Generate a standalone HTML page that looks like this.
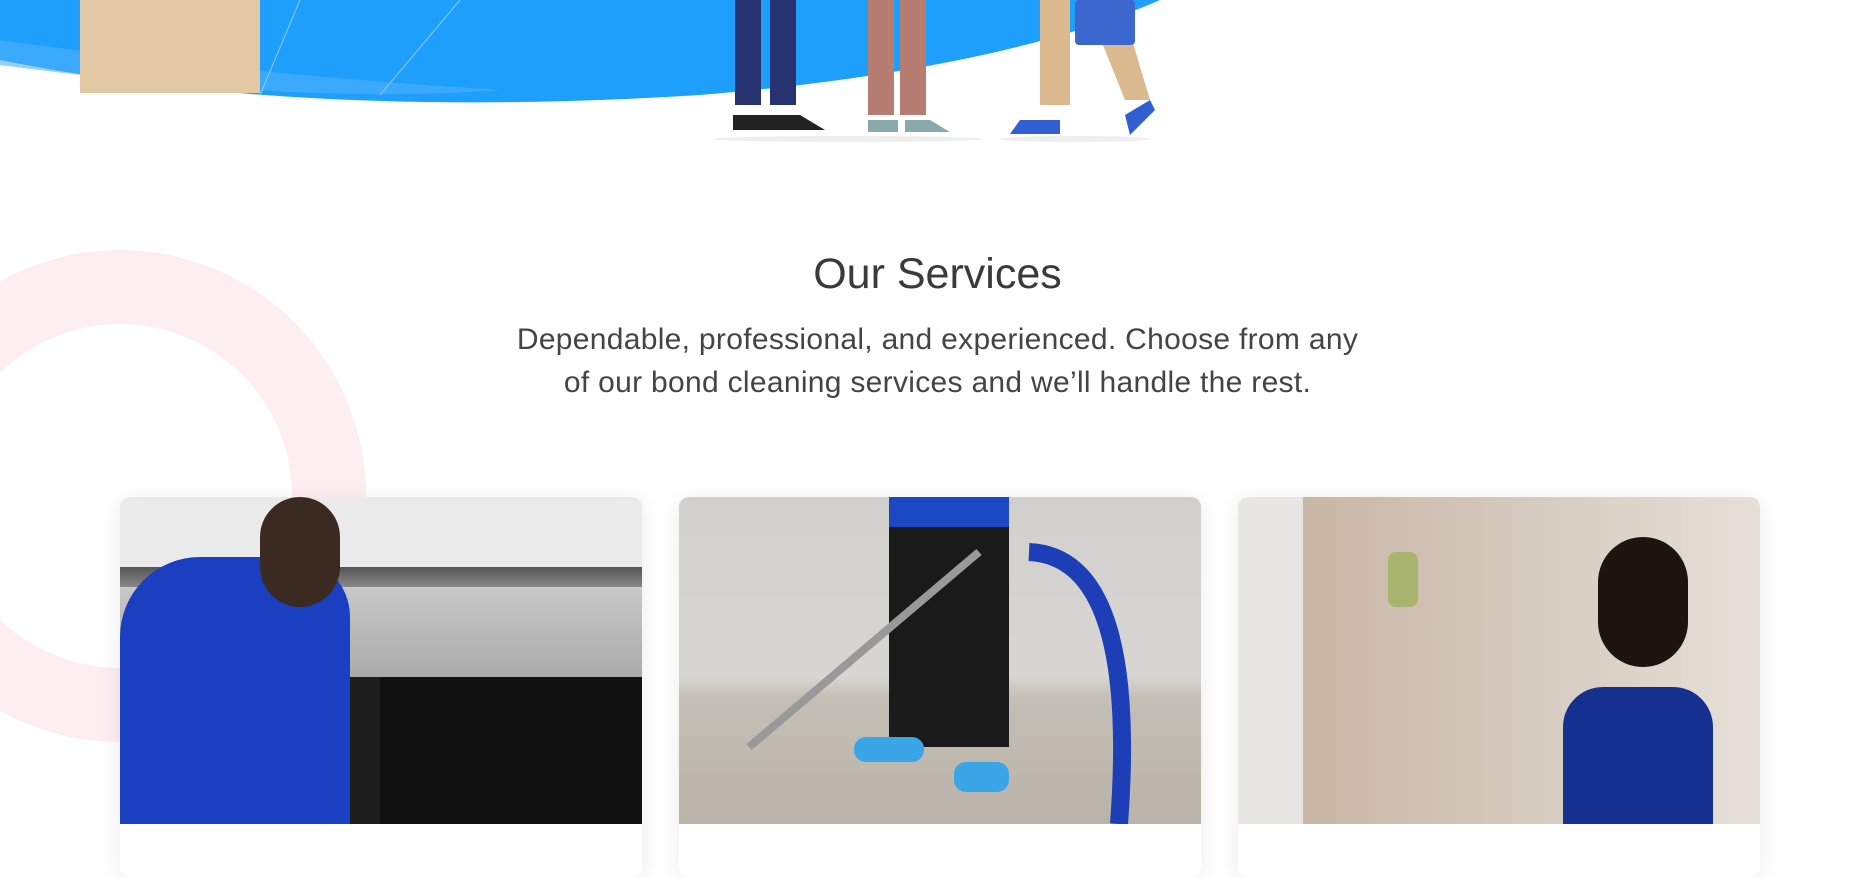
<!DOCTYPE html>
<html><head><meta charset="utf-8"><style>
body{margin:0;width:1875px;height:867px;overflow:hidden;background:#fff;font-family:"Liberation Sans",sans-serif;position:relative}
.abs{position:absolute}
.card{position:absolute;top:497px;width:522px;height:380px;border-radius:10px;overflow:hidden;background:#fff;box-shadow:0 4px 24px rgba(0,0,0,.08)}
.img{position:absolute;left:0;top:0;width:100%;height:327px;overflow:hidden}
</style></head><body>
<svg class="abs" style="left:0;top:0" width="1875" height="150">
<path d="M0 0 H1160 Q1000 70 700 95 Q300 120 0 60 Z" fill="#1f9ffc"/>
<path d="M0 40 Q250 75 500 90 Q300 105 0 65Z" fill="#4fb2fb" opacity=".6"/>
<rect x="80" y="0" width="180" height="93" fill="#e3c8a6"/>
<line x1="260" y1="95" x2="300" y2="0" stroke="#8cc9fb" stroke-width="1"/>
<line x1="380" y1="95" x2="460" y2="0" stroke="#8cc9fb" stroke-width="1"/>
<rect x="735" y="0" width="26" height="105" fill="#273370"/><rect x="770" y="0" width="26" height="105" fill="#273370"/>
<path d="M733 115 h40 l10 15 h-50z" fill="#222"/><path d="M770 115 h30 l25 15 h-55z" fill="#222"/>
<rect x="868" y="0" width="26" height="115" fill="#b67d70"/><rect x="900" y="0" width="26" height="115" fill="#b67d70"/>
<path d="M868 120 h30 v12 h-30z" fill="#8aa"/><path d="M905 120 h25 l20 12 h-45z" fill="#8aa"/>
<rect x="1040" y="0" width="30" height="105" fill="#d9b98d"/><path d="M1085 0 h35 l30 100 h-25z" fill="#d9b98d"/>
<rect x="1075" y="0" width="60" height="45" rx="4" fill="#3b67cf"/>
<path d="M1020 120 h40 v14 h-50z" fill="#2f5fd0"/><path d="M1125 115 l25 -15 l5 10 l-25 25z" fill="#2f5fd0"/>
<ellipse cx="848" cy="139" rx="135" ry="3" fill="#eee"/><ellipse cx="1075" cy="139" rx="75" ry="3" fill="#eee"/>
</svg>
<svg class="abs" style="left:0;top:250" width="400" height="500"><circle cx="120" cy="246" r="209" fill="none" stroke="#fdeef1" stroke-width="74"/></svg>
<div class="abs" style="left:0;width:1875px;top:250px;text-align:center;font-size:43px;color:#3a3a3a;font-weight:300">Our Services</div>
<div class="abs" style="left:0;width:1875px;top:318px;text-align:center;font-size:30px;letter-spacing:0.3px;line-height:43px;color:#444">Dependable, professional, and experienced. Choose from any<br>of our bond cleaning services and we’ll handle the rest.</div>
<div class="card" style="left:120px"><div class="img" style="background:linear-gradient(#eaeaea 0,#eaeaea 70px,#555 70px,#888 90px,#c8c8c8 90px,#aaa 180px,#1d1d1d 180px)">
<div class="abs" style="left:260px;top:180px;width:262px;height:147px;background:#111"></div>
<div class="abs" style="left:0;top:60px;width:230px;height:270px;background:#1a3fc0;border-radius:80px 60px 0 0"></div>
<div class="abs" style="left:140px;top:0;width:80px;height:110px;background:#3a2a22;border-radius:40px"></div></div></div>
<div class="card" style="left:679px"><div class="img" style="background:linear-gradient(#d2d0cc 0,#d8d6d2 180px,#c4bfb6 200px,#b9b3a9 327px)">
<div class="abs" style="left:210px;top:0;width:120px;height:30px;background:#1c48c6"></div>
<div class="abs" style="left:210px;top:30px;width:120px;height:220px;background:#1a1a1a"></div>
<div class="abs" style="left:175px;top:240px;width:70px;height:25px;background:#3aa6e8;border-radius:12px"></div>
<div class="abs" style="left:275px;top:265px;width:55px;height:30px;background:#3aa6e8;border-radius:12px"></div>
<svg class="abs" style="left:0;top:0" width="522" height="327"><path d="M350 55 Q460 60 440 327" stroke="#1c3fb8" stroke-width="18" fill="none"/><path d="M300 55 L70 250" stroke="#999" stroke-width="8"/></svg></div></div>
<div class="card" style="left:1238px"><div class="img" style="background:linear-gradient(90deg,#e8e6e2 0,#e8e6e2 65px,#c9b6a4 65px,#d6cbc0 300px,#e6e0d8 522px)">
<div class="abs" style="left:325px;top:190px;width:150px;height:140px;background:#15308f;border-radius:40px 40px 0 0"></div>
<div class="abs" style="left:360px;top:40px;width:90px;height:130px;background:#1d1410;border-radius:45px"></div>
<div class="abs" style="left:150px;top:55px;width:30px;height:55px;background:#a9b56e;border-radius:8px"></div></div></div>
</body></html>
